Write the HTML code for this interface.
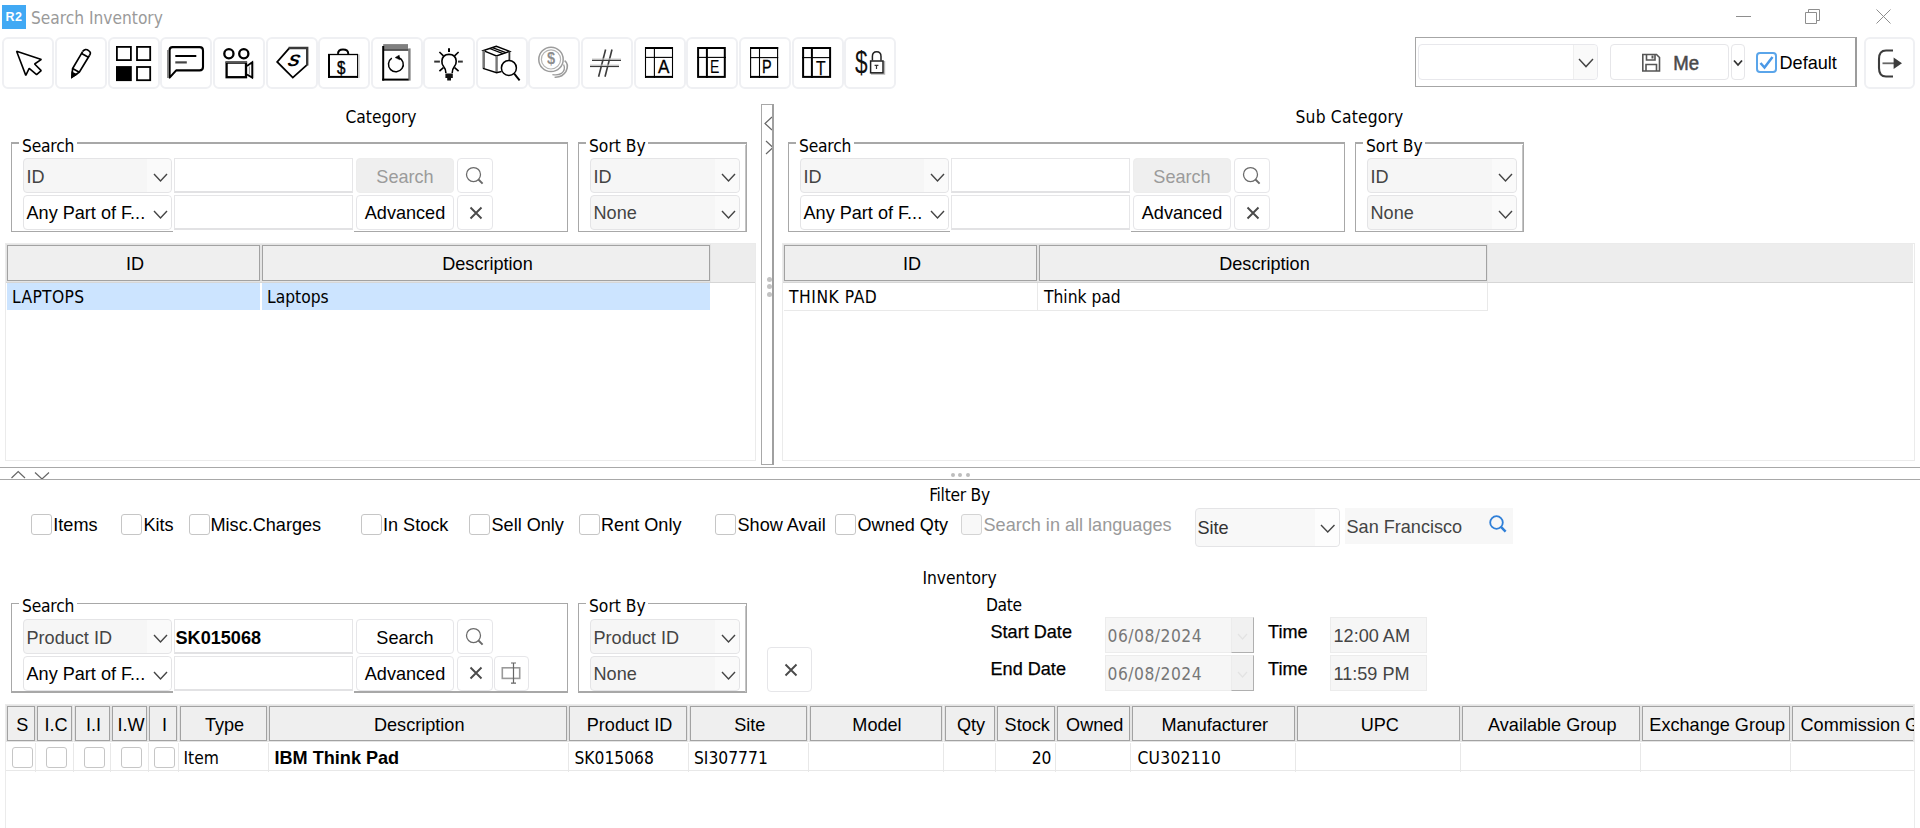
<!DOCTYPE html>
<html lang="en">
<head>
<meta charset="utf-8">
<title>Search Inventory</title>
<style>
html,body{margin:0;padding:0;background:#fff;}
body{width:1920px;height:828px;overflow:hidden;}
#app{position:relative;width:1920px;height:828px;overflow:hidden;background:#fff;font-family:"Liberation Sans",Arial,sans-serif;color:#000;}
.a{position:absolute;box-sizing:border-box;}
.t{white-space:nowrap;line-height:20px;}
.ar{font-family:"Liberation Sans",Arial,sans-serif;}
.sg{font-family:"DejaVu Sans Condensed","DejaVu Sans","Liberation Sans",sans-serif;font-stretch:condensed;}
.b{font-weight:bold;}
.tb{background:#fff;border:2px solid #eff0f3;border-radius:6px;}
.btn{background:#fff;border:1px solid #e6e6e9;border-radius:4px;}
.btn.dis{background:#efefef;border-color:#ededed;}
.cb{border:1px solid #e4e4e6;border-radius:4px;}
.tx{background:#fff;border:1px solid #e6e6e8;border-bottom:2px solid #e2e2e4;}
.gb{border:1px solid #a8a8a8;}
.th{background:#efefef;border:1px solid #a2a2a2;box-shadow:0 0 0 1px #e4e4e4;}
.chk{background:#fff;border:1px solid #c6c6c6;border-radius:3px;}
.ro{background:#f6f6f6;border:1px solid #ececec;}
</style>
</head>
<body>
<div id="app">
<div class="a " style="left:2px;top:5px;width:24px;height:24px;background:#41a9f4;"></div>
<div class="a t ar b" style="left:-286px;width:600px;text-align:center;top:7px;font-size:12.5px;color:#fff;letter-spacing:0.6px;">R2</div>
<div class="a t sg" style="left:31px;top:8px;font-size:17.2px;color:#9a9a9a;">Search Inventory</div>
<svg class="a" style="left:1730px;top:4px" width="170" height="26" viewBox="1730 4 170 26"><g fill="none" stroke="#8e8e8e" stroke-width="1"><path d="M1736,16.5H1751"/><path d="M1805.5,12.5H1816.5V23.5H1805.5Z"/><path d="M1808.5,12.5V9.5H1819.5V20.5H1816.5"/><path d="M1876.5,9.5L1890.5,23.5M1890.5,9.5L1876.5,23.5"/></g></svg>
<div class="a tb" style="left:2px;top:37px;width:52px;height:52px;"></div>
<div class="a tb" style="left:55px;top:37px;width:52px;height:52px;"></div>
<div class="a tb" style="left:108px;top:37px;width:52px;height:52px;"></div>
<div class="a tb" style="left:160px;top:37px;width:52px;height:52px;"></div>
<div class="a tb" style="left:213px;top:37px;width:52px;height:52px;"></div>
<div class="a tb" style="left:266px;top:37px;width:52px;height:52px;"></div>
<div class="a tb" style="left:318px;top:37px;width:52px;height:52px;"></div>
<div class="a tb" style="left:371px;top:37px;width:52px;height:52px;"></div>
<div class="a tb" style="left:423px;top:37px;width:52px;height:52px;"></div>
<div class="a tb" style="left:476px;top:37px;width:52px;height:52px;"></div>
<div class="a tb" style="left:528px;top:37px;width:52px;height:52px;"></div>
<div class="a tb" style="left:581px;top:37px;width:52px;height:52px;"></div>
<div class="a tb" style="left:634px;top:37px;width:52px;height:52px;"></div>
<div class="a tb" style="left:686px;top:37px;width:52px;height:52px;"></div>
<div class="a tb" style="left:739px;top:37px;width:52px;height:52px;"></div>
<div class="a tb" style="left:792px;top:37px;width:52px;height:52px;"></div>
<div class="a tb" style="left:844px;top:37px;width:52px;height:52px;"></div>
<svg class="a" style="left:0;top:36px" width="900" height="56" viewBox="0 36 900 56" fill="none" stroke="#000" stroke-linejoin="miter">
<!-- cursor -->
<path d="M16.6,51.3L41.4,59.4L34.6,64L41.2,70.6L36.6,74.7L29.2,68.4L25.8,75.4Z" stroke-width="1.6" stroke-linejoin="bevel"/>
<!-- pencil -->
<g stroke-width="1.7">
<path d="M82.6,51.6L72.6,68.6L72,77L79.3,72.2L89.6,55.2"/>
<path d="M82.6,51.6Q85.2,48 88.6,50.6Q91.6,52.6 89.6,55.2"/>
<path d="M81.6,53.4L88.4,57.2"/>
<path d="M72.6,68.6L79.3,72.2"/>
<path d="M72.2,72.6L72,77L76,74.6Z" fill="#000"/>
</g>
<!-- grid -->
<g stroke-width="1.8">
<rect x="116.9" y="46.9" width="14" height="13.2"/>
<rect x="137" y="46.9" width="13.2" height="13.2"/>
<rect x="116.9" y="67" width="14" height="13.2" fill="#000"/>
<rect x="137" y="67" width="13.2" height="13.2"/>
</g>
<!-- comment -->
<path d="M167.6,50V78" stroke="#8a8a8a" stroke-width="1.2"/>
<path d="M169.6,77.6V50Q169.6,47.1 172.6,47.1H199.6Q203,47.1 203,50.4V67Q203,70.4 199.6,70.4H176.2Z" stroke-width="2.1" stroke-linejoin="round"/>
<path d="M175.3,56H196.3" stroke-width="2"/>
<path d="M175.3,62.4H186.8" stroke="#444" stroke-width="2.2"/>
<!-- camera -->
<g stroke-width="2.3">
<circle cx="228.9" cy="53.7" r="4.6"/>
<circle cx="243.8" cy="53.7" r="4.6"/>
<rect x="226.6" y="62.6" width="19.4" height="14.6"/>
</g>
<path d="M225.5,62.2H247" stroke="#555" stroke-width="1.6"/>
<path d="M247,66L252.2,62.2V77.6L247,74.4" stroke-width="1.8"/>
<path d="M253.6,61.6V78" stroke="#aaa" stroke-width="1"/>
<path d="M249.4,66.5V74.5" stroke="#999" stroke-width="1"/>
<!-- tag -->
<path d="M289.3,48.1L277.2,62L292.8,77.6L307,64.8" stroke-width="1.8"/>
<path d="M288.6,48H307.2V65.4" stroke="#3a3a3a" stroke-width="2.4"/>
<!-- briefcase -->
<path d="M329,53.9V77.9" stroke-width="2"/>
<path d="M328,76.9H358" stroke-width="2"/>
<path d="M328,54.5H358" stroke-width="1.3"/>
<path d="M357.6,54V78" stroke-width="1.1"/>
<path d="M359,54.5V78" stroke="#bbb" stroke-width="1"/>
<path d="M337.9,53.9Q338.2,49.6 343,49.6Q348.2,49.6 348.3,53.9" stroke-width="2"/>
<!-- doc refresh -->
<rect x="383.2" y="44.1" width="24.8" height="6.6" fill="#808080" stroke="none"/>
<path d="M383.2,50H409" stroke="#444" stroke-width="1.4"/>
<rect x="408.2" y="48.4" width="2.4" height="32.2" fill="#808080" stroke="none"/>
<path d="M383.2,46V80.6" stroke-width="2"/>
<path d="M382.2,79.6H408.6" stroke-width="2"/>
<path d="M391.8,58.2A7.4,7.4 0 1 0 398.6,57.5" stroke-width="1.5"/>
<path d="M399.2,55.2L395.2,57.6L399.8,59.8Z" fill="#000" stroke-width="0.5"/>
<!-- bulb -->
<g stroke-width="1.6">
<path d="M449,48.2V51.9" stroke-width="2"/>
<path d="M445.9,72.9Q445.9,69.4 443.6,66.6Q441.6,64 441.9,61Q442.6,54.4 449,54.4Q455.6,54.4 456.2,61Q456.4,64 454.4,66.6Q452.2,69.4 452.2,72.9"/>
<path d="M434.2,61.6H439.9" stroke="#333" stroke-width="2"/><path d="M458,61.6H462.8" stroke="#333" stroke-width="2"/>
<path d="M439.4,52L443.4,55.8"/><path d="M458.6,52L454.6,55.8"/>
<path d="M439.4,71.2L443.4,67.6"/><path d="M458.6,71.2L454.6,67.6"/>
</g>
<path d="M445.4,73.4H452.8V78H451V80.4H447.2V78H445.4Z" fill="#111" stroke="none"/>
<!-- box search -->
<g stroke-width="1.3">
<path d="M496.4,46.3L483.4,50.6L496.4,55.9L509.6,51.4Z" stroke-width="1.5"/>
<path d="M489.6,48.5L503,53.6" stroke-width="1.3"/><path d="M492.4,47.6L505.8,52.7" stroke-width="1.3"/>
<path d="M483.7,50.6V68.6" stroke="#777" stroke-width="2.6"/>
<path d="M496.6,56V72.6" stroke="#777" stroke-width="2.4"/>
<path d="M483,68.4L496.6,72.8L501.6,71.6" stroke-width="1.5"/>
<path d="M509.4,51.4V60" stroke="#333" stroke-width="1.8"/>
<circle cx="508.9" cy="67.9" r="7.5" fill="#fff" stroke-width="1.5"/>
<path d="M514.2,73.6L519.6,80.4" stroke-width="1.9"/>
</g>
<!-- coins -->
<g stroke="#9c9c9c" stroke-width="1.3">
<path d="M564.6,60.6Q569.4,64.2 566,71.4Q562.4,77.6 554.6,77.2" stroke-width="1.6"/>
<path d="M563.6,64.4Q566,69.6 561.4,73.4Q558,75.6 552.4,74.6" stroke-width="1.3"/>
<circle cx="551" cy="59.4" r="12.2" fill="#fff" stroke-width="1.5"/>
<circle cx="551" cy="59.4" r="9.6" stroke="#b4b4b4" stroke-width="1.2"/>
</g>
<!-- hash -->
<g stroke="#3c3c3c" stroke-width="1.4">
<path d="M592,60.3H621"/><path d="M590,66.4H619"/>
<path d="M605.6,49.5L598.6,76.8" stroke-width="1.6"/><path d="M612,49.5L605,76.8" stroke-width="1.6"/>
</g>
<g stroke="#c8c8c8" stroke-width="1">
<path d="M592,59H621"/><path d="M590,65.1H619"/>
</g>
<!-- table A -->
<g>
<path d="M645,48H673" stroke-width="2"/><path d="M645,76.9H673" stroke-width="2"/>
<path d="M645.5,47V78" stroke-width="1.1"/><path d="M672.5,47V78" stroke-width="1.1"/>
<path d="M654.4,47V78" stroke-width="1.1"/><path d="M645,57.4H673" stroke-width="1.1"/>
</g>
<!-- table E -->
<g>
<rect x="698.1" y="48" width="26.7" height="28.9" stroke-width="2"/>
<path d="M706.9,47V78" stroke-width="2"/><path d="M697,57.4H726" stroke-width="1.1"/>
</g>
<!-- table P -->
<g>
<path d="M750,48H778.2" stroke-width="2"/><path d="M750,76.9H778.2" stroke-width="2"/>
<path d="M750.6,47V78" stroke-width="1.1"/><path d="M777.6,47V78" stroke-width="1.1"/>
<path d="M759.5,47V78" stroke-width="1.1"/><path d="M750,57.6H778.2" stroke-width="1.1"/>
</g>
<!-- table T -->
<g>
<rect x="803.1" y="48" width="27" height="28.9" stroke-width="2"/>
<path d="M811.9,47V78" stroke-width="2"/><path d="M802,57.6H831" stroke-width="1.1"/>
</g>
<!-- lock -->
<path d="M871,73.9H884.4V61" stroke="#b5b5b5" stroke-width="1.6"/>
<rect x="870.6" y="61" width="12.4" height="11.8" fill="#fff" stroke="#222" stroke-width="1.5"/>
<path d="M872.4,60.6V56.6Q872.4,51.8 876.7,51.8Q881,51.8 881,56.6V60.6" stroke="#222" stroke-width="1.5"/>
<path d="M874.6,65.4H878.4M876.5,65.4V69" stroke="#333" stroke-width="1.2"/>
</svg>
<div class="a t ar" style="left:337.4px;top:57.6px;font-size:18px;line-height:20px;transform:scaleX(0.84);transform-origin:0 0;-webkit-text-stroke:0.45px #000;">$</div>
<div class="a t ar" style="left:546.9px;top:49.2px;font-size:17px;line-height:20px;color:#8d8d8d;font-weight:bold;transform:scaleX(0.86);transform-origin:0 0;">$</div>
<div class="a t ar" style="left:657.6px;top:56.6px;font-size:18px;line-height:20px;transform:scaleX(0.95);transform-origin:0 0;-webkit-text-stroke:0.3px #000;">A</div>
<div class="a t ar" style="left:710.4px;top:56.6px;font-size:18px;line-height:20px;transform:scaleX(0.78);transform-origin:0 0;">E</div>
<div class="a t ar" style="left:761.8px;top:56.6px;font-size:18px;line-height:20px;transform:scaleX(0.8);transform-origin:0 0;-webkit-text-stroke:0.3px #000;">P</div>
<div class="a t ar" style="left:815.9px;top:57.3px;font-size:19.6px;line-height:22px;transform:scaleX(0.8);transform-origin:0 0;-webkit-text-stroke:0.25px #000;">T</div>
<div class="a t ar" style="left:854.8px;top:43.9px;font-size:31.5px;line-height:36px;color:#111;transform:scaleX(0.72);transform-origin:0 0;">$</div>
<div class="a t ar b" style="left:288.6px;top:50.2px;font-size:16.5px;line-height:20px;transform:skewX(-22deg) scaleX(1.05);transform-origin:50% 50%;">S</div>

<div class="a " style="left:1415px;top:37px;width:442px;height:50px;border:1px solid #a6a6a6;border-right:2px solid #9c9c9c;"></div>
<div class="a cb" style="left:1418px;top:44px;width:180px;height:36px;background:#fff;border-color:#e8e8ec;"></div>
<div class="a " style="left:1573px;top:45px;width:24px;height:34px;background:#fafafa;border-left:1px solid #efefef;border-radius:0 4px 4px 0;"></div>
<svg class="a" style="left:1576.8px;top:57.2px" width="18" height="11.6" viewBox="-2 -2 18 11.6"><polyline points="0,0 7.0,7.6 14,0" fill="none" stroke="#444" stroke-width="1.4"/></svg>
<div class="a btn" style="left:1610px;top:44px;width:119px;height:36px;"></div>
<div class="a btn" style="left:1731px;top:44px;width:14px;height:36px;"></div>
<svg class="a" style="left:1732px;top:57px" width="12" height="12" viewBox="0 0 12 12"><polyline points="2,3.5 6,8 10,3.5" fill="none" stroke="#333" stroke-width="1.8"/></svg>
<svg class="a" style="left:1640px;top:52px" width="24" height="22" viewBox="1640 52 24 22"><g fill="none" stroke="#555" stroke-width="1.6"><path d="M1642.8,54.5H1656.5L1659.5,57.5V71H1642.8Z"/><path d="M1646.5,54.5V60H1655V54.5"/><path d="M1646,71V64.5H1656.5V71"/></g><rect x="1651.5" y="55.5" width="2" height="3" fill="#555"/></svg>
<div class="a t ar" style="left:1673.3px;top:54px;font-size:18.6px;color:#4a4a4a;transform:scaleY(1.08);transform-origin:0 80%;-webkit-text-stroke:0.5px #4a4a4a;">Me</div>
<div class="a " style="left:1756px;top:52px;width:21px;height:21px;background:#fff;border:2px solid #5aa5ea;border-radius:4px;"></div>
<svg class="a" style="left:1756px;top:52px" width="21" height="21" viewBox="0 0 21 21"><polyline points="4.5,11 8.5,15.5 16.5,5" fill="none" stroke="#4a98e6" stroke-width="2.5"/></svg>
<div class="a t ar" style="left:1779.5px;top:53px;font-size:18.1px;">Default</div>
<div class="a tb" style="left:1864px;top:37px;width:51px;height:52px;"></div>
<svg class="a" style="left:1870px;top:44px" width="40" height="40" viewBox="1870 44 40 40"><path d="M1893,50.5H1886Q1879,50.5 1879,59V68Q1879,76.5 1886,76.5H1893" fill="none" stroke="#3c3c3c" stroke-width="2.1"/><path d="M1882.5,63.3H1896" stroke="#666" stroke-width="1.8" fill="none"/><path d="M1893.6,57.6L1902,63.3L1893.6,69Z" fill="#3c3c3c"/></svg>
<div class="a t sg" style="left:81px;width:600px;text-align:center;top:107px;font-size:17.3px;letter-spacing:0px;">Category</div>
<div class="a gb" style="left:11px;top:142px;width:557px;height:90px;border-top-width:2px;"></div>
<div class="a " style="left:19px;top:139px;width:58px;height:7px;background:#fff;"></div>
<div class="a t sg" style="left:22px;top:136px;font-size:17.3px;letter-spacing:-0.2px;">Search</div>
<div class="a cb" style="left:23px;top:158px;width:149px;height:35px;background:#f6f6f6;"></div>
<div class="a " style="left:146.5px;top:159px;width:24.5px;height:33px;background:#fafafa;border-radius:0 4px 4px 0;"></div>
<div class="a t ar" style="left:26.5px;top:167px;font-size:18.1px;color:#444;">ID</div>
<svg class="a" style="left:152.0px;top:171.5px" width="17" height="11" viewBox="-2 -2 17 11"><polyline points="0,0 6.5,7 13,0" fill="none" stroke="#444" stroke-width="1.4"/></svg>
<div class="a cb" style="left:23px;top:195px;width:149px;height:35px;background:#fff;"></div>
<div class="a " style="left:146.5px;top:196px;width:24.5px;height:33px;background:#fff;border-radius:0 4px 4px 0;"></div>
<div class="a t ar" style="left:26.5px;top:203px;font-size:18.1px;color:#000;">Any Part of F...</div>
<svg class="a" style="left:152.0px;top:208.5px" width="17" height="11" viewBox="-2 -2 17 11"><polyline points="0,0 6.5,7 13,0" fill="none" stroke="#444" stroke-width="1.4"/></svg>
<div class="a tx" style="left:174px;top:158px;width:179px;height:35px;"></div>
<div class="a " style="left:173px;top:195px;width:181px;height:38px;background:#fff;"></div>
<div class="a tx" style="left:174px;top:195px;width:179px;height:35px;"></div>
<div class="a btn dis" style="left:356px;top:158px;width:98px;height:35px;"></div>
<div class="a t ar" style="left:105px;width:600px;text-align:center;top:167px;font-size:18.1px;color:#9b9b9b;">Search</div>
<div class="a btn" style="left:356px;top:195px;width:98px;height:35px;"></div>
<div class="a t ar" style="left:105px;width:600px;text-align:center;top:203px;font-size:18.1px;">Advanced</div>
<div class="a btn" style="left:457px;top:158px;width:36px;height:35px;"></div>
<svg class="a" style="left:463px;top:163.5px" width="24" height="24" viewBox="-12 -12 24 24"><circle cx="-1.5" cy="-1.5" r="7" fill="none" stroke="#6a6a6a" stroke-width="1.25"/><line x1="3.449" y1="3.449" x2="7.6" y2="7.6" stroke="#6a6a6a" stroke-width="1.95"/></svg>
<div class="a btn" style="left:457px;top:195px;width:36px;height:35px;"></div>
<svg class="a" style="left:466px;top:202.5px" width="20" height="20" viewBox="-10 -10 20 20"><path d="M-5.5,-5.5L5.5,5.5M5.5,-5.5L-5.5,5.5" fill="none" stroke="#4a4a4a" stroke-width="1.9"/></svg>
<div class="a gb" style="left:578px;top:142px;width:169px;height:90px;border-top-width:2px;"></div>
<div class="a " style="left:586px;top:139px;width:62px;height:7px;background:#fff;"></div>
<div class="a t sg" style="left:589px;top:136px;font-size:17.3px;">Sort By</div>
<div class="a " style="left:745px;top:145px;width:1px;height:86px;background:#c4c4c4;"></div>
<div class="a cb" style="left:590px;top:158px;width:150px;height:35px;background:#f6f6f6;"></div>
<div class="a " style="left:714.5px;top:159px;width:24.5px;height:33px;background:#fafafa;border-radius:0 4px 4px 0;"></div>
<div class="a t ar" style="left:593.5px;top:167px;font-size:18.1px;color:#444;">ID</div>
<svg class="a" style="left:720.0px;top:171.5px" width="17" height="11" viewBox="-2 -2 17 11"><polyline points="0,0 6.5,7 13,0" fill="none" stroke="#444" stroke-width="1.4"/></svg>
<div class="a cb" style="left:590px;top:195px;width:150px;height:35px;background:#f6f6f6;"></div>
<div class="a " style="left:714.5px;top:196px;width:24.5px;height:33px;background:#fafafa;border-radius:0 4px 4px 0;"></div>
<div class="a t ar" style="left:593.5px;top:203px;font-size:18.1px;color:#444;">None</div>
<svg class="a" style="left:720.0px;top:208.5px" width="17" height="11" viewBox="-2 -2 17 11"><polyline points="0,0 6.5,7 13,0" fill="none" stroke="#444" stroke-width="1.4"/></svg>
<div class="a " style="left:5px;top:243px;width:751px;height:218px;border:1px solid #ebebeb;"></div>
<div class="a " style="left:6px;top:244px;width:749px;height:39px;background:#ededed;border-bottom:1px solid #d6d6d6;"></div>
<div class="a th" style="left:7px;top:245px;width:253px;height:36px;"></div>
<div class="a t ar" style="left:-165.0px;width:600px;text-align:center;top:254px;font-size:18.1px;">ID</div>
<div class="a th" style="left:262px;top:245px;width:448px;height:36px;"></div>
<div class="a t ar" style="left:187.5px;width:600px;text-align:center;top:254px;font-size:18.1px;">Description</div>
<div class="a " style="left:7px;top:283px;width:253px;height:27px;background:#cce4ff;"></div>
<div class="a " style="left:262px;top:283px;width:448px;height:27px;background:#cce4ff;"></div>
<div class="a t sg" style="left:12px;top:287px;font-size:17.3px;letter-spacing:0.35px;">LAPTOPS</div>
<div class="a t sg" style="left:267px;top:287px;font-size:17.3px;">Laptops</div>
<div class="a t sg" style="left:1049.5px;width:600px;text-align:center;top:107px;font-size:17.3px;letter-spacing:0.2px;">Sub Category</div>
<div class="a gb" style="left:788px;top:142px;width:557px;height:90px;border-top-width:2px;"></div>
<div class="a " style="left:796px;top:139px;width:58px;height:7px;background:#fff;"></div>
<div class="a t sg" style="left:799px;top:136px;font-size:17.3px;letter-spacing:-0.2px;">Search</div>
<div class="a cb" style="left:800px;top:158px;width:149px;height:35px;background:#f6f6f6;"></div>
<div class="a " style="left:923.5px;top:159px;width:24.5px;height:33px;background:#fafafa;border-radius:0 4px 4px 0;"></div>
<div class="a t ar" style="left:803.5px;top:167px;font-size:18.1px;color:#444;">ID</div>
<svg class="a" style="left:929.0px;top:171.5px" width="17" height="11" viewBox="-2 -2 17 11"><polyline points="0,0 6.5,7 13,0" fill="none" stroke="#444" stroke-width="1.4"/></svg>
<div class="a cb" style="left:800px;top:195px;width:149px;height:35px;background:#fff;"></div>
<div class="a " style="left:923.5px;top:196px;width:24.5px;height:33px;background:#fff;border-radius:0 4px 4px 0;"></div>
<div class="a t ar" style="left:803.5px;top:203px;font-size:18.1px;color:#000;">Any Part of F...</div>
<svg class="a" style="left:929.0px;top:208.5px" width="17" height="11" viewBox="-2 -2 17 11"><polyline points="0,0 6.5,7 13,0" fill="none" stroke="#444" stroke-width="1.4"/></svg>
<div class="a tx" style="left:951px;top:158px;width:179px;height:35px;"></div>
<div class="a " style="left:950px;top:195px;width:181px;height:38px;background:#fff;"></div>
<div class="a tx" style="left:951px;top:195px;width:179px;height:35px;"></div>
<div class="a btn dis" style="left:1133px;top:158px;width:98px;height:35px;"></div>
<div class="a t ar" style="left:882px;width:600px;text-align:center;top:167px;font-size:18.1px;color:#9b9b9b;">Search</div>
<div class="a btn" style="left:1133px;top:195px;width:98px;height:35px;"></div>
<div class="a t ar" style="left:882px;width:600px;text-align:center;top:203px;font-size:18.1px;">Advanced</div>
<div class="a btn" style="left:1234px;top:158px;width:36px;height:35px;"></div>
<svg class="a" style="left:1240px;top:163.5px" width="24" height="24" viewBox="-12 -12 24 24"><circle cx="-1.5" cy="-1.5" r="7" fill="none" stroke="#6a6a6a" stroke-width="1.25"/><line x1="3.449" y1="3.449" x2="7.6" y2="7.6" stroke="#6a6a6a" stroke-width="1.95"/></svg>
<div class="a btn" style="left:1234px;top:195px;width:36px;height:35px;"></div>
<svg class="a" style="left:1243px;top:202.5px" width="20" height="20" viewBox="-10 -10 20 20"><path d="M-5.5,-5.5L5.5,5.5M5.5,-5.5L-5.5,5.5" fill="none" stroke="#4a4a4a" stroke-width="1.9"/></svg>
<div class="a gb" style="left:1355px;top:142px;width:169px;height:90px;border-top-width:2px;"></div>
<div class="a " style="left:1363px;top:139px;width:62px;height:7px;background:#fff;"></div>
<div class="a t sg" style="left:1366px;top:136px;font-size:17.3px;">Sort By</div>
<div class="a " style="left:1522px;top:145px;width:1px;height:86px;background:#c4c4c4;"></div>
<div class="a cb" style="left:1367px;top:158px;width:150px;height:35px;background:#f6f6f6;"></div>
<div class="a " style="left:1491.5px;top:159px;width:24.5px;height:33px;background:#fafafa;border-radius:0 4px 4px 0;"></div>
<div class="a t ar" style="left:1370.5px;top:167px;font-size:18.1px;color:#444;">ID</div>
<svg class="a" style="left:1497.0px;top:171.5px" width="17" height="11" viewBox="-2 -2 17 11"><polyline points="0,0 6.5,7 13,0" fill="none" stroke="#444" stroke-width="1.4"/></svg>
<div class="a cb" style="left:1367px;top:195px;width:150px;height:35px;background:#f6f6f6;"></div>
<div class="a " style="left:1491.5px;top:196px;width:24.5px;height:33px;background:#fafafa;border-radius:0 4px 4px 0;"></div>
<div class="a t ar" style="left:1370.5px;top:203px;font-size:18.1px;color:#444;">None</div>
<svg class="a" style="left:1497.0px;top:208.5px" width="17" height="11" viewBox="-2 -2 17 11"><polyline points="0,0 6.5,7 13,0" fill="none" stroke="#444" stroke-width="1.4"/></svg>
<div class="a " style="left:782px;top:243px;width:1133px;height:218px;border:1px solid #ebebeb;"></div>
<div class="a " style="left:783px;top:244px;width:1130px;height:39px;background:#ededed;border-bottom:1px solid #d6d6d6;"></div>
<div class="a th" style="left:784px;top:245px;width:253px;height:36px;"></div>
<div class="a t ar" style="left:612.0px;width:600px;text-align:center;top:254px;font-size:18.1px;">ID</div>
<div class="a th" style="left:1039px;top:245px;width:448px;height:36px;"></div>
<div class="a t ar" style="left:964.5px;width:600px;text-align:center;top:254px;font-size:18.1px;">Description</div>
<div class="a " style="left:784px;top:310px;width:704px;height:1px;background:#e9e9e9;"></div>
<div class="a " style="left:1037px;top:283px;width:1px;height:28px;background:#e9e9e9;"></div>
<div class="a " style="left:1487px;top:283px;width:1px;height:28px;background:#e9e9e9;"></div>
<div class="a t sg" style="left:789px;top:287px;font-size:17.3px;letter-spacing:0.55px;">THINK PAD</div>
<div class="a t sg" style="left:1044px;top:287px;font-size:17.3px;">Think pad</div>
<div class="a " style="left:761px;top:104px;width:13px;height:361px;border:1px solid #a8a8a8;border-right:2px solid #a0a0a0;background:#fff;"></div>
<svg class="a" style="left:761px;top:112px" width="14" height="46" viewBox="761 112 14 46"><g fill="none" stroke="#666" stroke-width="1.2"><polyline points="772,117 765,123.5 772,130"/><polyline points="766,141 773,147.5 766,154"/></g></svg>
<div class="a " style="left:772px;top:104px;width:2px;height:361px;background:#a0a0a0;"></div>
<div class="a " style="left:766.5px;top:276.5px;width:5px;height:5px;background:#c2c2c2;border-radius:50%;"></div>
<div class="a " style="left:766.5px;top:284.0px;width:5px;height:5px;background:#c2c2c2;border-radius:50%;"></div>
<div class="a " style="left:766.5px;top:291.5px;width:5px;height:5px;background:#c2c2c2;border-radius:50%;"></div>
<div class="a " style="left:0px;top:467px;width:1920px;height:1px;background:#a8a8a8;"></div>
<div class="a " style="left:0px;top:479px;width:1920px;height:1px;background:#a8a8a8;"></div>
<svg class="a" style="left:8px;top:469px" width="46" height="10" viewBox="8 469 46 10"><g fill="none" stroke="#666" stroke-width="1.2"><polyline points="11.5,478 18.2,471.5 25,478"/><polyline points="35,472.5 42,479 49,472.5"/></g></svg>
<div class="a " style="left:950.5px;top:472.8px;width:4px;height:4px;background:#bdbdbd;border-radius:50%;"></div>
<div class="a " style="left:958.3px;top:472.8px;width:4px;height:4px;background:#bdbdbd;border-radius:50%;"></div>
<div class="a " style="left:966px;top:472.8px;width:4px;height:4px;background:#bdbdbd;border-radius:50%;"></div>
<div class="a t sg" style="left:659.5px;width:600px;text-align:center;top:485px;font-size:17.3px;letter-spacing:-0.28px;">Filter By</div>
<div class="a chk" style="left:31px;top:514px;width:21px;height:21px;"></div>
<div class="a t ar" style="left:53.3px;top:515px;font-size:18.1px;">Items</div>
<div class="a chk" style="left:121px;top:514px;width:21px;height:21px;"></div>
<div class="a t ar" style="left:143.5px;top:515px;font-size:18.1px;">Kits</div>
<div class="a chk" style="left:189px;top:514px;width:21px;height:21px;"></div>
<div class="a t ar" style="left:210.5px;top:515px;font-size:18.1px;">Misc.Charges</div>
<div class="a chk" style="left:361px;top:514px;width:21px;height:21px;"></div>
<div class="a t ar" style="left:383px;top:515px;font-size:18.1px;">In Stock</div>
<div class="a chk" style="left:469px;top:514px;width:21px;height:21px;"></div>
<div class="a t ar" style="left:491.5px;top:515px;font-size:18.1px;">Sell Only</div>
<div class="a chk" style="left:579px;top:514px;width:21px;height:21px;"></div>
<div class="a t ar" style="left:601px;top:515px;font-size:18.1px;">Rent Only</div>
<div class="a chk" style="left:715px;top:514px;width:21px;height:21px;"></div>
<div class="a t ar" style="left:737.5px;top:515px;font-size:18.1px;">Show Avail</div>
<div class="a chk" style="left:835px;top:514px;width:21px;height:21px;"></div>
<div class="a t ar" style="left:857.5px;top:515px;font-size:18.1px;">Owned Qty</div>
<div class="a chk" style="left:961px;top:514px;width:21px;height:21px;background:#f8f8f8;border-color:#d4d4d4;"></div>
<div class="a t ar" style="left:983.5px;top:515px;font-size:18.1px;color:#9a9a9a;">Search in all languages</div>
<div class="a cb" style="left:1195px;top:508px;width:145px;height:39px;background:#f8f8f8;"></div>
<div class="a " style="left:1315px;top:509px;width:24px;height:37px;background:#fdfdfd;border-radius:0 4px 4px 0;"></div>
<div class="a t ar" style="left:1197.5px;top:518px;font-size:18.1px;color:#333;">Site</div>
<svg class="a" style="left:1318.95px;top:522.5px" width="17.5" height="11" viewBox="-2 -2 17.5 11"><polyline points="0,0 6.75,7 13.5,0" fill="none" stroke="#444" stroke-width="1.4"/></svg>
<div class="a " style="left:1345px;top:508px;width:168px;height:36px;background:#f7f7f7;"></div>
<div class="a t ar" style="left:1346.5px;top:517px;font-size:18.1px;color:#444;">San Francisco</div>
<svg class="a" style="left:1485.5px;top:511.5px" width="24" height="24" viewBox="-12 -12 24 24"><circle cx="-1.5" cy="-1.5" r="6.3" fill="none" stroke="#2f7fd8" stroke-width="1.8"/><line x1="2.9540999999999995" y1="2.9540999999999995" x2="7.6" y2="7.6" stroke="#2f7fd8" stroke-width="2.5"/></svg>
<div class="a t sg" style="left:659.5px;width:600px;text-align:center;top:568px;font-size:17.3px;">Inventory</div>
<div class="a t sg" style="left:986px;top:595px;font-size:17.3px;letter-spacing:-0.4px;">Date</div>
<div class="a t ar" style="left:990.5px;top:622px;font-size:18.1px;-webkit-text-stroke:0.25px #000;">Start Date</div>
<div class="a t ar" style="left:990.5px;top:659px;font-size:18.1px;-webkit-text-stroke:0.25px #000;">End Date</div>
<div class="a t ar" style="left:1268px;top:622px;font-size:18.1px;-webkit-text-stroke:0.25px #000;">Time</div>
<div class="a t ar" style="left:1268px;top:659px;font-size:18.1px;-webkit-text-stroke:0.25px #000;">Time</div>
<div class="a ro" style="left:1105px;top:617px;width:149px;height:36px;"></div>
<div class="a " style="left:1231px;top:617px;width:23px;height:36px;background:#f1f1f1;border:1px solid #ececec;border-right:1px solid #b0b0b0;border-bottom:1px solid #b0b0b0;"></div>
<svg class="a" style="left:1236.0px;top:631.5px" width="13" height="9" viewBox="-2 -2 13 9"><polyline points="0,0 4.5,5 9,0" fill="none" stroke="#e3e3e3" stroke-width="1.2"/></svg>
<div class="a t sg" style="left:1107.5px;top:626px;font-size:17.3px;color:#777;letter-spacing:0.5px;">06/08/2024</div>
<div class="a ro" style="left:1330px;top:617px;width:97px;height:36px;"></div>
<div class="a t ar" style="left:1333.5px;top:626px;font-size:18.1px;color:#444;">12:00 AM</div>
<div class="a ro" style="left:1105px;top:655px;width:149px;height:36px;"></div>
<div class="a " style="left:1231px;top:655px;width:23px;height:36px;background:#f1f1f1;border:1px solid #ececec;border-right:1px solid #b0b0b0;border-bottom:1px solid #b0b0b0;"></div>
<svg class="a" style="left:1236.0px;top:669.5px" width="13" height="9" viewBox="-2 -2 13 9"><polyline points="0,0 4.5,5 9,0" fill="none" stroke="#e3e3e3" stroke-width="1.2"/></svg>
<div class="a t sg" style="left:1107.5px;top:664px;font-size:17.3px;color:#777;letter-spacing:0.5px;">06/08/2024</div>
<div class="a ro" style="left:1330px;top:655px;width:97px;height:36px;"></div>
<div class="a t ar" style="left:1333.5px;top:664px;font-size:18.1px;color:#444;">11:59 PM</div>
<div class="a gb" style="left:11px;top:603px;width:557px;height:90px;border-bottom-width:2px;"></div>
<div class="a " style="left:19px;top:600px;width:58px;height:7px;background:#fff;"></div>
<div class="a t sg" style="left:22px;top:596px;font-size:17.3px;letter-spacing:-0.2px;">Search</div>
<div class="a cb" style="left:23px;top:619px;width:149px;height:35px;background:#f6f6f6;"></div>
<div class="a " style="left:146.5px;top:620px;width:24.5px;height:33px;background:#fafafa;border-radius:0 4px 4px 0;"></div>
<div class="a t ar" style="left:26.5px;top:628px;font-size:18.1px;color:#444;">Product ID</div>
<svg class="a" style="left:152.0px;top:632.5px" width="17" height="11" viewBox="-2 -2 17 11"><polyline points="0,0 6.5,7 13,0" fill="none" stroke="#444" stroke-width="1.4"/></svg>
<div class="a cb" style="left:23px;top:656px;width:149px;height:35px;background:#fff;"></div>
<div class="a " style="left:146.5px;top:657px;width:24.5px;height:33px;background:#fff;border-radius:0 4px 4px 0;"></div>
<div class="a t ar" style="left:26.5px;top:664px;font-size:18.1px;color:#000;">Any Part of F...</div>
<svg class="a" style="left:152.0px;top:669.5px" width="17" height="11" viewBox="-2 -2 17 11"><polyline points="0,0 6.5,7 13,0" fill="none" stroke="#444" stroke-width="1.4"/></svg>
<div class="a tx" style="left:174px;top:619px;width:179px;height:35px;"></div>
<div class="a " style="left:173px;top:656px;width:181px;height:38px;background:#fff;"></div>
<div class="a tx" style="left:174px;top:656px;width:179px;height:35px;"></div>
<div class="a btn" style="left:356px;top:619px;width:98px;height:35px;"></div>
<div class="a t ar" style="left:105px;width:600px;text-align:center;top:628px;font-size:18.1px;">Search</div>
<div class="a btn" style="left:356px;top:656px;width:98px;height:35px;"></div>
<div class="a t ar" style="left:105px;width:600px;text-align:center;top:664px;font-size:18.1px;">Advanced</div>
<div class="a btn" style="left:457px;top:619px;width:36px;height:35px;"></div>
<svg class="a" style="left:463px;top:624.5px" width="24" height="24" viewBox="-12 -12 24 24"><circle cx="-1.5" cy="-1.5" r="7" fill="none" stroke="#6a6a6a" stroke-width="1.25"/><line x1="3.449" y1="3.449" x2="7.6" y2="7.6" stroke="#6a6a6a" stroke-width="1.95"/></svg>
<div class="a btn" style="left:457px;top:656px;width:36px;height:35px;"></div>
<svg class="a" style="left:466px;top:663px" width="20" height="20" viewBox="-10 -10 20 20"><path d="M-5.5,-5.5L5.5,5.5M5.5,-5.5L-5.5,5.5" fill="none" stroke="#4a4a4a" stroke-width="1.9"/></svg>
<div class="a t ar b" style="left:175.5px;top:628px;font-size:18.1px;">SK015068</div>
<div class="a btn" style="left:494px;top:656px;width:35px;height:35px;"></div>
<svg class="a" style="left:498px;top:660px" width="28" height="28" viewBox="498 660 28 28"><rect x="502.3" y="667.8" width="17.4" height="10.6" fill="none" stroke="#9a9a9a" stroke-width="1.6"/><path d="M513.5,663V683.2M511,663H516M511,683.2H516" fill="none" stroke="#666" stroke-width="1.2"/></svg>
<div class="a gb" style="left:578px;top:603px;width:169px;height:90px;border-bottom-width:2px;"></div>
<div class="a " style="left:586px;top:600px;width:62px;height:7px;background:#fff;"></div>
<div class="a t sg" style="left:589px;top:596px;font-size:17.3px;">Sort By</div>
<div class="a " style="left:745px;top:606px;width:1px;height:86px;background:#c4c4c4;"></div>
<div class="a cb" style="left:590px;top:619px;width:150px;height:35px;background:#f6f6f6;"></div>
<div class="a " style="left:714.5px;top:620px;width:24.5px;height:33px;background:#fafafa;border-radius:0 4px 4px 0;"></div>
<div class="a t ar" style="left:593.5px;top:628px;font-size:18.1px;color:#444;">Product ID</div>
<svg class="a" style="left:720.0px;top:632.5px" width="17" height="11" viewBox="-2 -2 17 11"><polyline points="0,0 6.5,7 13,0" fill="none" stroke="#444" stroke-width="1.4"/></svg>
<div class="a cb" style="left:590px;top:656px;width:150px;height:35px;background:#f6f6f6;"></div>
<div class="a " style="left:714.5px;top:657px;width:24.5px;height:33px;background:#fafafa;border-radius:0 4px 4px 0;"></div>
<div class="a t ar" style="left:593.5px;top:664px;font-size:18.1px;color:#444;">None</div>
<svg class="a" style="left:720.0px;top:669.5px" width="17" height="11" viewBox="-2 -2 17 11"><polyline points="0,0 6.5,7 13,0" fill="none" stroke="#444" stroke-width="1.4"/></svg>
<div class="a btn" style="left:767px;top:647px;width:45px;height:45px;"></div>
<svg class="a" style="left:781px;top:660px" width="20" height="20" viewBox="-10 -10 20 20"><path d="M-5.5,-5.5L5.5,5.5M5.5,-5.5L-5.5,5.5" fill="none" stroke="#4a4a4a" stroke-width="1.9"/></svg>
<div class="a " style="left:5px;top:704px;width:1910px;height:130px;border:1px solid #ebebeb;border-bottom:none;"></div>
<div class="a " style="left:6px;top:705px;width:1907px;height:37px;background:#f0f0f0;"></div>
<div class="a th" style="left:7px;top:706px;width:27.5px;height:35px;"></div>
<div class="a t ar" style="left:-277.75px;width:600px;text-align:center;top:715px;font-size:18.1px;">S</div>
<div class="a th" style="left:37px;top:706px;width:35px;height:35px;"></div>
<div class="a t ar" style="left:-244.0px;width:600px;text-align:center;top:715px;font-size:18.1px;">I.C</div>
<div class="a th" style="left:74.5px;top:706px;width:35.0px;height:35px;"></div>
<div class="a t ar" style="left:-206.5px;width:600px;text-align:center;top:715px;font-size:18.1px;">I.I</div>
<div class="a th" style="left:112px;top:706px;width:35px;height:35px;"></div>
<div class="a t ar" style="left:-169.0px;width:600px;text-align:center;top:715px;font-size:18.1px;">I.W</div>
<div class="a th" style="left:149px;top:706px;width:28px;height:35px;"></div>
<div class="a t ar" style="left:-135.5px;width:600px;text-align:center;top:715px;font-size:18.1px;">I</div>
<div class="a th" style="left:179.5px;top:706px;width:87.0px;height:35px;"></div>
<div class="a t ar" style="left:-75.5px;width:600px;text-align:center;top:715px;font-size:18.1px;">Type</div>
<div class="a th" style="left:269px;top:706px;width:297.5px;height:35px;"></div>
<div class="a t ar" style="left:119.25px;width:600px;text-align:center;top:715px;font-size:18.1px;">Description</div>
<div class="a th" style="left:569px;top:706px;width:118px;height:35px;"></div>
<div class="a t ar" style="left:329.5px;width:600px;text-align:center;top:715px;font-size:18.1px;">Product ID</div>
<div class="a th" style="left:689.5px;top:706px;width:117.5px;height:35px;"></div>
<div class="a t ar" style="left:449.75px;width:600px;text-align:center;top:715px;font-size:18.1px;">Site</div>
<div class="a th" style="left:809.5px;top:706px;width:132.0px;height:35px;"></div>
<div class="a t ar" style="left:577.0px;width:600px;text-align:center;top:715px;font-size:18.1px;">Model</div>
<div class="a th" style="left:944.5px;top:706px;width:50.0px;height:35px;"></div>
<div class="a t ar" style="left:671.0px;width:600px;text-align:center;top:715px;font-size:18.1px;">Qty</div>
<div class="a th" style="left:997px;top:706px;width:57.5px;height:35px;"></div>
<div class="a t ar" style="left:727.25px;width:600px;text-align:center;top:715px;font-size:18.1px;">Stock</div>
<div class="a th" style="left:1057px;top:706px;width:72.5px;height:35px;"></div>
<div class="a t ar" style="left:794.75px;width:600px;text-align:center;top:715px;font-size:18.1px;">Owned</div>
<div class="a th" style="left:1132px;top:706px;width:162.5px;height:35px;"></div>
<div class="a t ar" style="left:914.75px;width:600px;text-align:center;top:715px;font-size:18.1px;">Manufacturer</div>
<div class="a th" style="left:1297px;top:706px;width:162.5px;height:35px;"></div>
<div class="a t ar" style="left:1079.75px;width:600px;text-align:center;top:715px;font-size:18.1px;">UPC</div>
<div class="a th" style="left:1462px;top:706px;width:177.5px;height:35px;"></div>
<div class="a t ar" style="left:1252.25px;width:600px;text-align:center;top:715px;font-size:18.1px;">Available Group</div>
<div class="a th" style="left:1642px;top:706px;width:147.5px;height:35px;"></div>
<div class="a t ar" style="left:1417.25px;width:600px;text-align:center;top:715px;font-size:18.1px;">Exchange Group</div>
<div class="a th" style="left:1792px;top:706px;width:121px;height:35px;border-right:none;"></div>
<div class="a" style="left:1792px;top:706px;width:121.5px;height:36px;overflow:hidden;"><div class="a t ar" style="left:8.5px;top:9px;font-size:18.1px;">Commission Group</div></div>
<div class="a " style="left:6px;top:770px;width:1908px;height:1px;background:#e8e8e8;"></div>
<div class="a " style="left:35px;top:743px;width:1px;height:29px;background:#e8e8e8;"></div>
<div class="a " style="left:73px;top:743px;width:1px;height:29px;background:#e8e8e8;"></div>
<div class="a " style="left:110px;top:743px;width:1px;height:29px;background:#e8e8e8;"></div>
<div class="a " style="left:148px;top:743px;width:1px;height:29px;background:#e8e8e8;"></div>
<div class="a " style="left:178px;top:743px;width:1px;height:29px;background:#e8e8e8;"></div>
<div class="a " style="left:268px;top:743px;width:1px;height:29px;background:#e8e8e8;"></div>
<div class="a " style="left:568px;top:743px;width:1px;height:29px;background:#e8e8e8;"></div>
<div class="a " style="left:688px;top:743px;width:1px;height:29px;background:#e8e8e8;"></div>
<div class="a " style="left:808px;top:743px;width:1px;height:29px;background:#e8e8e8;"></div>
<div class="a " style="left:943px;top:743px;width:1px;height:29px;background:#e8e8e8;"></div>
<div class="a " style="left:995px;top:743px;width:1px;height:29px;background:#e8e8e8;"></div>
<div class="a " style="left:1055px;top:743px;width:1px;height:29px;background:#e8e8e8;"></div>
<div class="a " style="left:1130px;top:743px;width:1px;height:29px;background:#e8e8e8;"></div>
<div class="a " style="left:1295px;top:743px;width:1px;height:29px;background:#e8e8e8;"></div>
<div class="a " style="left:1460px;top:743px;width:1px;height:29px;background:#e8e8e8;"></div>
<div class="a " style="left:1640px;top:743px;width:1px;height:29px;background:#e8e8e8;"></div>
<div class="a " style="left:1790px;top:743px;width:1px;height:29px;background:#e8e8e8;"></div>
<div class="a chk" style="left:12px;top:747px;width:21px;height:21px;"></div>
<div class="a chk" style="left:46px;top:747px;width:21px;height:21px;"></div>
<div class="a chk" style="left:84px;top:747px;width:21px;height:21px;"></div>
<div class="a chk" style="left:121px;top:747px;width:21px;height:21px;"></div>
<div class="a chk" style="left:154px;top:747px;width:21px;height:21px;"></div>
<div class="a t sg" style="left:183.5px;top:748px;font-size:17.3px;">Item</div>
<div class="a t ar b" style="left:274.5px;top:748px;font-size:18.1px;">IBM Think Pad</div>
<div class="a t sg" style="left:574.5px;top:748px;font-size:17.3px;">SK015068</div>
<div class="a t sg" style="left:694px;top:748px;font-size:17.3px;">SI307771</div>
<div class="a t sg" style="left:451.5px;width:600px;text-align:right;top:748px;font-size:17.3px;">20</div>
<div class="a t sg" style="left:1137.5px;top:748px;font-size:17.3px;letter-spacing:0.25px;">CU302110</div>
</div>
</body>
</html>
